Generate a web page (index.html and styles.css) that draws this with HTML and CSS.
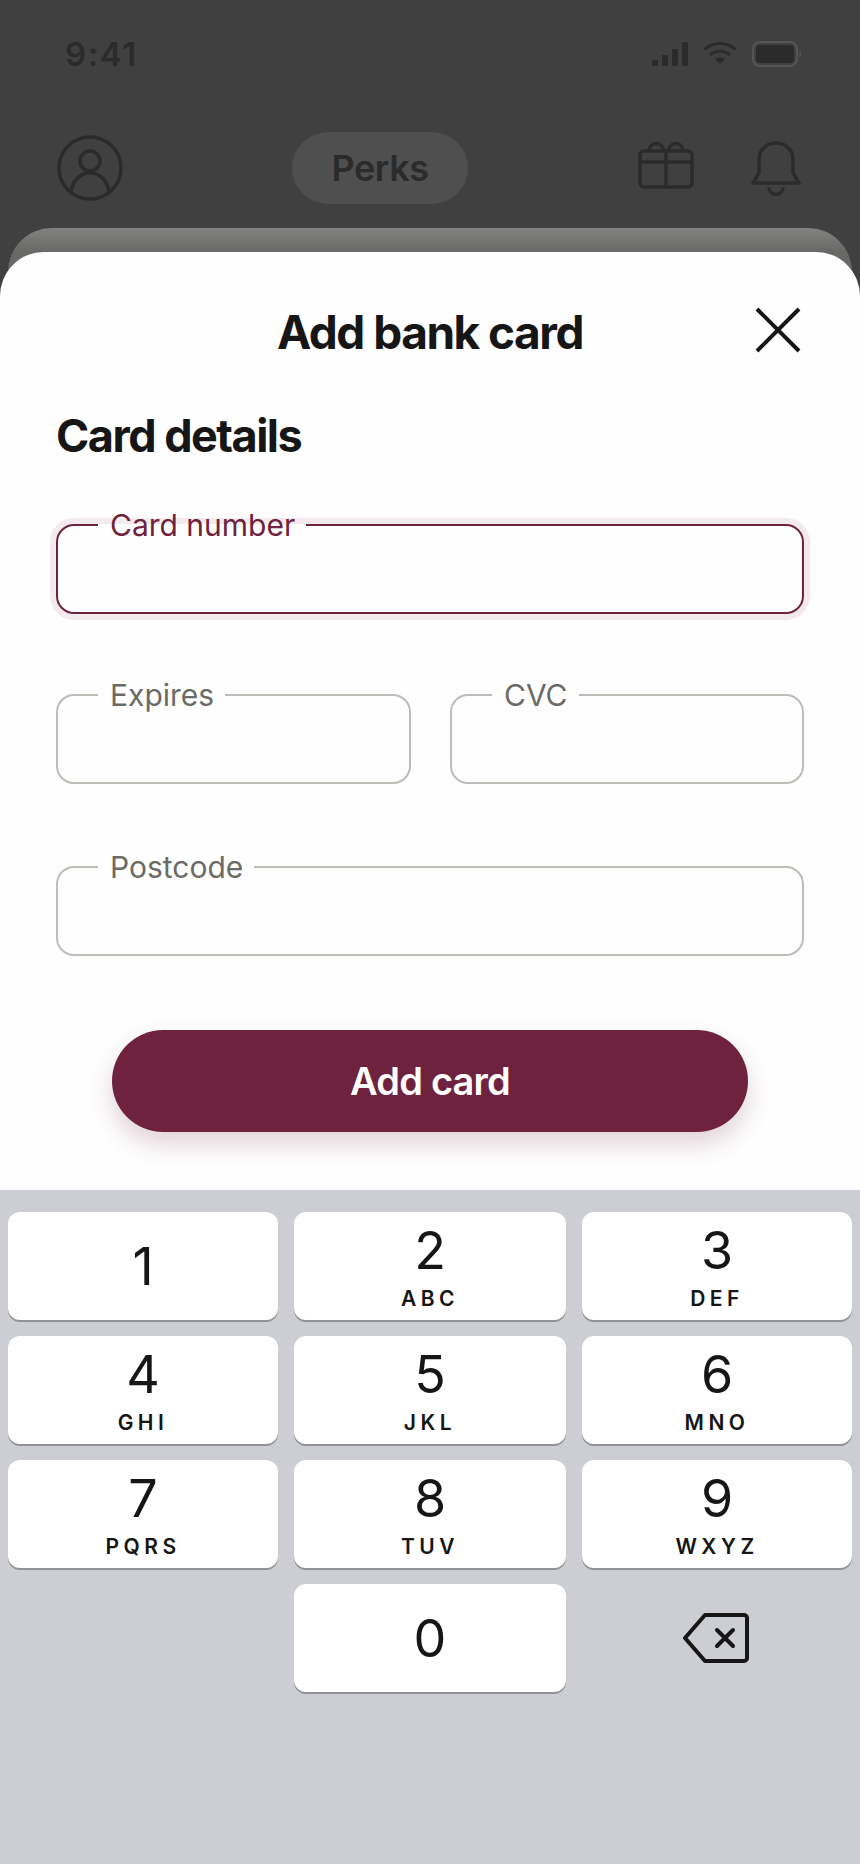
FILE: index.html
```html
<!DOCTYPE html>
<html lang="en">
  <head>
    <meta charset="UTF-8" />
    <meta name="viewport" content="width=device-width, initial-scale=1.0" />
    <title>Add bank card</title>
    <link rel="stylesheet" href="styles.css">
  </head>
  <body>
    <div class="status-bar">
      <span class="status-time">9:41</span>
      <div class="status-icons">
        <svg width="36" height="24" viewBox="0 0 36 24" fill="#2b2b2b">
          <rect x="0" y="18" width="6" height="6" rx="1" />
          <rect x="10" y="13" width="6" height="11" rx="1" />
          <rect x="20" y="7" width="6" height="17" rx="1" />
          <rect x="30" y="0" width="6" height="24" rx="1" />
        </svg>
        <svg width="34" height="24" viewBox="0 0 34 24" fill="none" stroke="#2b2b2b" stroke-width="3">
          <path d="M1.5 7.5C10 -0.5 24 -0.5 32.5 7.5" />
          <path d="M7 13C12.5 8 21.500 8 27 13" />
          <path d="M17 22l-5-5c3-2 7-2 10 0z" fill="#2b2b2b" stroke="none" />
        </svg>
        <svg width="50" height="26" viewBox="0 0 50 26" fill="none">
          <rect x="1" y="1" width="44" height="24" rx="7" stroke="#555" stroke-width="2" />
          <rect x="4" y="4" width="38" height="18" rx="4" fill="#2b2b2b" />
          <path d="M47.500 9.500c2 .7 2 6.300 0 7z" fill="#555" />
        </svg>
      </div>
    </div>

    <div class="top-nav">
      <svg class="nav-avatar" width="66" height="66" viewBox="0 0 66 66" fill="none" stroke="#2b2b2b" stroke-width="3.500">
        <circle cx="33" cy="33" r="31" />
        <circle cx="33" cy="26" r="10" />
        <path d="M14 56c3-14 12-18 19-18s16 4 19 18" />
      </svg>
      <div class="nav-pill">Perks</div>
      <div class="nav-actions">
        <svg width="56" height="48" viewBox="0 0 56 48" fill="none" stroke="#2b2b2b" stroke-width="3.500" stroke-linejoin="round">
          <rect x="2" y="10" width="52" height="36" rx="4" />
          <path d="M2 21h52M28 10v36" />
          <path d="M11 10c1-10 13-10 15 0M30 10c2-10 14-10 15 0" />
        </svg>
        <svg width="50" height="56" viewBox="0 0 50 56" fill="none" stroke="#2b2b2b" stroke-width="3.500" stroke-linejoin="round" stroke-linecap="round">
          <path d="M2 42l6-10V19C8 8 16 2 25 2s17 6 17 17v13l6 10z" />
          <path d="M18 48c1 7 13 7 14 0" />
        </svg>
      </div>
    </div>

    <div class="sheet">
      <div class="sheet-header">
        <h1>Add bank card</h1>
        <svg class="close-icon" width="46" height="46" viewBox="0 0 46 46" fill="none" stroke="#161616" stroke-width="4">
          <path d="M2 2l42 42M44 2L2 44" />
        </svg>
      </div>

      <h2>Card details</h2>

      <form class="card-form">
        <fieldset class="field field-active">
          <legend>Card number</legend>
        </fieldset>
        <div class="field-row">
          <fieldset class="field">
            <legend>Expires</legend>
          </fieldset>
          <fieldset class="field">
            <legend>CVC</legend>
          </fieldset>
        </div>
        <fieldset class="field">
          <legend>Postcode</legend>
        </fieldset>
      </form>

      <button class="add-btn" type="button">Add card</button>
    </div>

    <div class="keypad">
      <div class="key key-single"><span class="digit">1</span></div>
      <div class="key"><span class="digit">2</span><span class="letters">ABC</span></div>
      <div class="key"><span class="digit">3</span><span class="letters">DEF</span></div>
      <div class="key"><span class="digit">4</span><span class="letters">GHI</span></div>
      <div class="key"><span class="digit">5</span><span class="letters">JKL</span></div>
      <div class="key"><span class="digit">6</span><span class="letters">MNO</span></div>
      <div class="key"><span class="digit">7</span><span class="letters">PQRS</span></div>
      <div class="key"><span class="digit">8</span><span class="letters">TUV</span></div>
      <div class="key"><span class="digit">9</span><span class="letters">WXYZ</span></div>
      <div class="key-blank"></div>
      <div class="key key-single"><span class="digit">0</span></div>
      <div class="key-blank">
        <svg width="68" height="52" viewBox="0 0 68 52" fill="none" stroke="#161616" stroke-width="4" stroke-linejoin="round" stroke-linecap="round">
          <path d="M22 3h39a3 3 0 0 1 3 3v40a3 3 0 0 1-3 3H22L2 26z" />
          <path d="M34 18l16 16M50 18L34 34" />
        </svg>
      </div>
    </div>
  </body>
</html>
```

FILE: styles.css
```css
* {
  margin: 0;
  padding: 0;
  box-sizing: border-box;
  font-family: "Inter", "Liberation Sans", sans-serif;
}

:root {
  --maroon: #6e223e;
  --ink: #161616;
  --dim-ink: #2b2b2b;
  --backdrop: #404040;
  --keypad-bg: #cdced3;
}

body {
  width: 860px;
  height: 1864px;
  display: flex;
  flex-direction: column;
  background: var(--backdrop);
  overflow: hidden;
}

.status-bar {
  height: 108px;
  padding: 36px 58px 0 65px;
  display: flex;
  justify-content: space-between;
  align-items: flex-start;
}

.status-time {
  font-size: 33px;
  line-height: 36px;
  font-weight: 600;
  letter-spacing: 1.6px;
  color: var(--dim-ink);
}

.status-icons {
  margin-top: 5px;
  display: flex;
  align-items: center;
  gap: 15px;
}

.top-nav {
  height: 120px;
  padding: 24px 59px 0 57px;
  display: flex;
  justify-content: space-between;
  align-items: flex-start;
  position: relative;
}

.nav-avatar {
  margin-top: 3px;
}

.nav-pill {
  position: absolute;
  left: 292px;
  top: 24px;
  width: 176px;
  height: 72px;
  border-radius: 36px;
  background: #4f4f4f;
  color: var(--dim-ink);
  font-size: 36px;
  font-weight: 600;
  letter-spacing: -0.5px;
  display: flex;
  align-items: center;
  justify-content: center;
}

.nav-actions {
  display: flex;
  align-items: flex-start;
  gap: 57px;
  margin-top: 9px;
}

.sheet {
  height: 938px;
  margin-top: 24px;
  padding: 0 56px;
  background: #fefefe;
  border-radius: 44px 44px 0 0;
  position: relative;
  display: flex;
  flex-direction: column;
}

.sheet::before {
  content: "";
  position: absolute;
  left: 8px;
  right: 8px;
  top: -24px;
  height: 100px;
  border-radius: 44px 44px 0 0;
  background: linear-gradient(#828280, #686866 24px);
  z-index: -1;
}

.sheet-header {
  height: 80px;
  margin-top: 40px;
  display: flex;
  align-items: center;
  justify-content: center;
  position: relative;
}

.close-icon {
  position: absolute;
  right: 3px;
  top: 15px;
}

h1 {
  font-size: 46px;
  font-weight: 700;
  letter-spacing: -1.5px;
  color: var(--ink);
}

h2 {
  margin-top: 39px;
  font-size: 45px;
  line-height: 50px;
  font-weight: 700;
  letter-spacing: -1.500px;
  color: var(--ink);
}

.card-form {
  margin-top: 46px;
  display: flex;
  flex-direction: column;
  gap: 63px;
}

.field-row {
  display: grid;
  grid-template-columns: 355px 354px;
  gap: 39px;
  margin-bottom: 2px;
}

.field {
  height: 107px;
  border: 2px solid #bdbdb8;
  border-radius: 18px;
  padding: 0 40px;
}

.field legend {
  padding: 0 11px 0 12px;
  font-size: 30px;
  line-height: 36px;
  color: #6b6b66;
}

.field-active {
  border-color: var(--maroon);
  box-shadow: 0 0 0 6px #f2eaed;
}

.field-active legend {
  color: var(--maroon);
}

.add-btn {
  margin: 74px auto 0;
  width: 636px;
  height: 102px;
  border: none;
  border-radius: 51px;
  background: var(--maroon);
  color: #fff;
  font-size: 38px;
  font-weight: 600;
  letter-spacing: -0.8px;
  box-shadow: 0 12px 24px rgba(110, 34, 62, 0.2);
}

.keypad {
  flex: 1;
  padding: 22px 8px;
  background: var(--keypad-bg);
  display: grid;
  grid-template-columns: 270px 272px 270px;
  grid-auto-rows: 108px;
  gap: 16px;
}

.key {
  background: #fff;
  border-radius: 12px;
  box-shadow: 0 2px 0 #929294;
  display: flex;
  flex-direction: column;
  align-items: center;
  color: var(--ink);
}

.key-single {
  justify-content: center;
}

.key-blank {
  display: flex;
  align-items: center;
  justify-content: center;
}

.digit {
  font-size: 52px;
  line-height: 64px;
  margin-top: 7px;
}

.key-single .digit {
  margin-top: 2px;
}

.letters {
  font-size: 21px;
  line-height: 26px;
  font-weight: 600;
  letter-spacing: 4.500px;
  margin-top: 3px;
}
```
